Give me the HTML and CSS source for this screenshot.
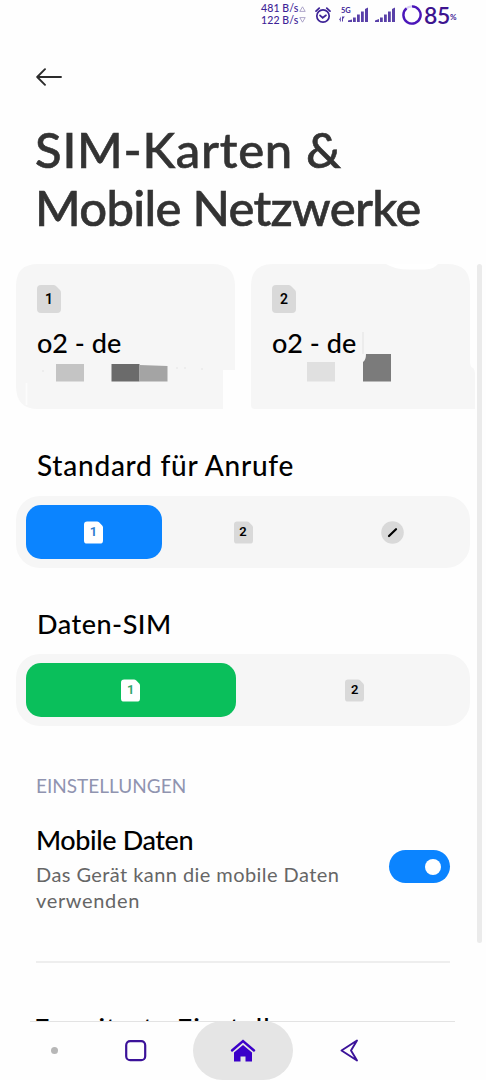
FILE: index.html
```html
<!DOCTYPE html>
<html lang="de">
<head>
<meta charset="utf-8">
<title>SIM-Karten &amp; Mobile Netzwerke</title>
<link rel="stylesheet" href="styles.css">
</head>
<body>
<svg class="defs" width="0" height="0">
  <symbol id="sim" viewBox="0 0 24 28"><path d="M4 0H16.500Q18 0 19 1L23 5Q24 6 24 7.500V24Q24 28 20 28H4Q0 28 0 24V4Q0 0 4 0Z" fill="currentColor"/></symbol>
</svg>
<header class="status">
  <div class="rates"><div class="rate"><span>481 B/s</span><svg width="7" height="6" viewBox="0 0 7 6"><path d="M.8 5.400 3.500.8 6.200 5.400Z"/></svg></div><div class="rate"><span>122 B/s</span><svg width="7" height="6" viewBox="0 0 7 6"><path d="M.8.6 3.500 5.200 6.200.6Z"/></svg></div></div>
  <svg class="alarm" width="16" height="17" viewBox="0 0 16 17"><circle cx="8" cy="9" r="6.200"/><path d="M1 4.200 4.200 1.200M11.800 1.200 15 4.200M5 8.300 7.700 10.800 11 8.300"/></svg>
  <div class="net"><span class="gen">5G</span><svg width="30" height="16" viewBox="0 0 30 16"><path d="M0 13 1.800 9.500V14.500H.9V13ZM3 14.500V9.500H5.800L4 12V14.500ZM9 15V13.500L13 12.500V15ZM14 15V10.500H16.800V15ZM18 15V7.500H20.800V15ZM22 15V4.500H24.800V15ZM26 15V2L29 .5V15Z"/></svg></div>
  <svg class="signal" width="20" height="16" viewBox="0 0 20 16"><path d="M0 15V13.500L4 12V15ZM5 15V10.500H7.800V15ZM9 15V7.500H11.800V15ZM13 15V4.500H15.800V15ZM17 15V2L20 .5V15Z"/></svg>
  <svg class="battery" width="20" height="20" viewBox="0 0 20 20"><circle cx="10" cy="10" r="8.600" stroke="#d9cff5"/><path d="M10 1.400A8.600 8.600 0 1 1 4.500 3.400" stroke="#4b16b9"/></svg>
  <span class="percent">85</span><span class="pct-sign">%</span>
</header>
<main class="content">
  <svg class="back" width="26" height="18" viewBox="0 0 26 18"><path d="M9 1.200 1.200 9 9 16.800M1.500 9H25"/></svg>
  <h1 class="title"><span class="t1">SIM-Karten &amp;</span><br><span class="t2">Mobile Netzwerke</span></h1>
  <section class="cards">
    <article class="card">
      <svg class="shape" width="224" height="146" viewBox="0 0 224 146"><path d="M22 0H196Q219 0 219 22V106H207V145H22Q0 145 0 122V22Q0 0 22 0Z" fill="#f6f6f6"/><path d="M10.500 119V141" stroke="#fff" stroke-width="2" opacity=".7"/><path d="M40 100H68V117.500H40Z" fill="#c4c4c4"/><path d="M95.500 100H123.500V117.500H95.500Z" fill="#6b6b6b"/><path d="M123.500 101 151.500 102V117.500H123.500Z" fill="#a4a4a4"/><path d="M26 107h2M160 104h2M168 104h2M185 105h2" stroke="#e4e4e4"/></svg>
      <div class="info"><span class="chip"><svg><use href="#sim"/></svg><b>1</b></span><span class="carrier">o2 - de</span></div>
    </article>
    <article class="card">
      <svg class="shape" width="225" height="146" viewBox="0 0 225 146"><path d="M22 0H196Q219 0 219 22V98Q219 103 222 104 224 105 224 112V145H4Q0 145 0 141V22Q0 0 22 0Z" fill="#f6f6f6"/><path d="M135 0Q145 6 160 5.500H174Q183 5 187 0Z" fill="#fff"/><path d="M112 68V90" stroke="#e2e2e2"/><path d="M56 98H84V117.500H56Z" fill="#e0e0e0"/><path d="M115 90H140V117.500H112V98Q115 96 115 90Z" fill="#7b7b7b"/></svg>
      <div class="info"><span class="chip"><svg><use href="#sim"/></svg><b>2</b></span><span class="carrier">o2 - de</span></div>
    </article>
  </section>
  <h2 class="heading calls">Standard für Anrufe</h2>
  <div class="selector three">
    <div class="option blue"><span class="chip small"><svg><use href="#sim"/></svg><b>1</b></span></div>
    <div class="option"><span class="chip small"><svg><use href="#sim"/></svg><b>2</b></span></div>
    <div class="option"><svg class="ask" width="23" height="23" viewBox="0 0 23 23"><circle cx="11.500" cy="11.500" r="11.300" fill="#d9d9d9"/><path d="M8 15 15 8.200" stroke="#000" stroke-width="2.200" stroke-linecap="round"/></svg></div>
  </div>
  <h2 class="heading data">Daten-SIM</h2>
  <div class="selector two">
    <div class="option green"><span class="chip small"><svg><use href="#sim"/></svg><b>1</b></span></div>
    <div class="option"><span class="chip small"><svg><use href="#sim"/></svg><b>2</b></span></div>
  </div>
  <h3 class="group">EINSTELLUNGEN</h3>
  <div class="setting">
    <div class="copy"><div class="name">Mobile Daten</div><div class="desc"><span class="d1">Das Gerät kann die mobile Daten</span><br><span class="d2">verwenden</span></div></div>
    <div class="toggle"><i></i></div>
  </div>
  <div class="rule"></div>
  <div class="next">Erweiterte Einstellungen</div>
</main>
<div class="scrollbar"></div>
<nav class="nav">
  <div class="edge"></div>
  <span class="dot"></span>
  <svg class="recent" width="22" height="22" viewBox="0 0 22 22"><rect x="1.200" y="1.200" width="19" height="19" rx="4"/></svg>
  <span class="home"><svg width="26" height="23" viewBox="0 0 26 23"><path d="M4 13.500 13 6 22 13.500V22.500H15.500V17.500H10.500V22.500H4Z" fill="#3b00c9"/><path d="M2 11.500 13 2 24 11.500" fill="none" stroke="#3b00c9" stroke-width="2.400" stroke-linecap="round"/></svg></span>
  <svg class="prev" width="19" height="23" viewBox="0 0 19 23"><path d="M17 1.500 1.500 11.500 17 21.500 11 11.500Z"/></svg>
</nav>
</body>
</html>
```
FILE: styles.css
```css
* { box-sizing: border-box; }
body {
  margin: 0; width: 486px; height: 1080px; overflow: hidden; position: relative;
  display: flex; flex-direction: column; background: #fefefe; color: #000;
  font-family: Lato, "Open Sans", sans-serif;
}
.defs { position: absolute; }
h1, h2, h3 { margin: 0; font-weight: 500; }

.status { height: 32px; flex: none; display: flex; align-items: flex-start; padding-left: 261px; color: #3d2396; }
.rates { width: 54px; padding-top: 3px; font-size: 10.500px; line-height: 11.500px; font-weight: 500; }
.rate { display: flex; align-items: center; white-space: nowrap; letter-spacing: .1px; }
.rate span { width: 38px; }
.rate svg { fill: none; stroke: #9b91bd; stroke-width: .8; }
.alarm { margin-top: 7px; fill: none; stroke: #3d2396; stroke-width: 1.700; stroke-linecap: round; }
.net { width: 30px; height: 24px; margin: 7px 0 0 8px; display: grid; }
.net > * { grid-area: 1 / 1; fill: #5940a8; }
.gen { font-size: 7.500px; line-height: 7px; padding-left: 2px; font-weight: 700; }
.signal { margin: 7px 0 0 6px; fill: #5940a8; }
.battery { margin: 5px 0 0 7px; fill: none; stroke-width: 2.400; }
.percent { margin-left: 2px; font-size: 23px; line-height: 31px; font-weight: 600; letter-spacing: -.4px; color: #3d148f; }
.pct-sign { font-size: 8px; line-height: 35px; font-weight: 700; }

.content { height: 989px; flex: none; overflow: hidden; display: flex; flex-direction: column; align-items: flex-start; }
.back { margin: 36px 0 0 36px; fill: none; stroke: #2c2c2c; stroke-width: 1.900; stroke-linecap: round; stroke-linejoin: round; flex: none; }
.title { margin: 34px 0 0 35px; height: 144px; font-size: 49px; line-height: 58px; color: #333; white-space: nowrap; -webkit-text-stroke: .6px #333; flex: none; }
.t1 { letter-spacing: .75px; }
.t2 { letter-spacing: -.7px; }
.cards { display: grid; grid-template-columns: 219px 219px; column-gap: 16px; margin-left: 16px; height: 145px; flex: none; }
.card { display: grid; }
.shape { grid-area: 1 / 1; overflow: visible; }
.info { grid-area: 1 / 1; display: flex; flex-direction: column; align-items: flex-start; padding: 21px 0 0 21px; }
.chip { width: 24px; height: 28px; display: grid; place-items: center; color: #d9d9d9; }
.chip svg { grid-area: 1 / 1; width: 100%; height: 100%; }
.chip b { grid-area: 1 / 1; font: 600 14px/14px Roboto, sans-serif; color: #000; }
.small { width: 19px; height: 23px; }
.small b { font-size: 13px; }
.carrier { margin-top: 13px; font-size: 27px; line-height: 34px; font-weight: 500; white-space: nowrap; }
.heading { font-size: 27px; line-height: 34px; flex: none; white-space: nowrap; }
.calls { margin: 39px 0 0 37px; font-size: 28px; letter-spacing: .75px; }
.data { margin: 39px 0 0 37px; letter-spacing: .5px; }
.selector { width: 454px; height: 72px; margin: 14px 0 0 16px; padding: 9px 9px 9px 9.500px; border-radius: 24px; background: #f6f6f6; display: grid; flex: none; }
.three { grid-template-columns: 136px 136px 136px; column-gap: 13.500px; }
.two { grid-template-columns: 210.500px 210.500px; column-gap: 13.500px; margin-top: 13px; }
.option { border-radius: 15px; display: grid; place-items: center; }
.blue { background: #0b84ff; }
.green { background: #0abf5b; }
.blue .chip, .green .chip { color: #fff; }
.blue b { color: #2c7cd0; }
.green b { color: #30a46b; }
.group { margin: 48px 0 0 36px; font-size: 19px; line-height: 24px; font-weight: 400; color: #9094b0; flex: none; }
.setting { width: 414px; margin: 24px 0 0 36px; display: flex; justify-content: space-between; align-items: center; height: 92px; flex: none; }
.copy { align-self: flex-start; white-space: nowrap; }
.name { font-size: 27px; line-height: 36px; font-weight: 500; letter-spacing: -.4px; }
.desc { margin-top: 3px; font-size: 20px; line-height: 26px; color: #666; }
.d1 { letter-spacing: .43px; }
.d2 { letter-spacing: .65px; }
.toggle { width: 61px; height: 33px; margin-top: -3px; border-radius: 17px; background: #0b84ff; display: flex; align-items: center; justify-content: flex-end; padding-right: 9px; }
.toggle i { width: 16px; height: 16px; border-radius: 50%; background: #fff; }
.rule { width: 414px; height: 2px; margin: 47px 0 0 36px; background: #eee; flex: none; }
.next { margin: 48px 0 0 34px; font-size: 27px; line-height: 34px; font-weight: 500; letter-spacing: 1px; white-space: nowrap; flex: none; }
.scrollbar { position: absolute; left: 477px; top: 264px; width: 5px; height: 679px; border-radius: 3px; background: #ebebeb; }

.nav { height: 59px; flex: none; display: grid; grid-template-columns: 30px 49px 114px 100px 94px 1fr; align-items: center; }
.edge { grid-area: 1 / 2 / 2 / 6; align-self: start; border-top: 1px solid #e3e3e3; margin-right: -68px; }
.dot { grid-area: 1 / 2; justify-self: center; width: 7px; height: 7px; border-radius: 50%; background: #b7b7b7; }
.recent { grid-area: 1 / 3; justify-self: center; fill: none; stroke: #3b1299; stroke-width: 2.200; }
.home { grid-area: 1 / 4; height: 59px; border-radius: 30px; background: #e5e5e5; display: grid; place-items: center; position: relative; }
.prev { grid-area: 1 / 5; justify-self: center; margin-left: 19px; fill: none; stroke: #3b1299; stroke-width: 1.900; stroke-linejoin: round; }
```
